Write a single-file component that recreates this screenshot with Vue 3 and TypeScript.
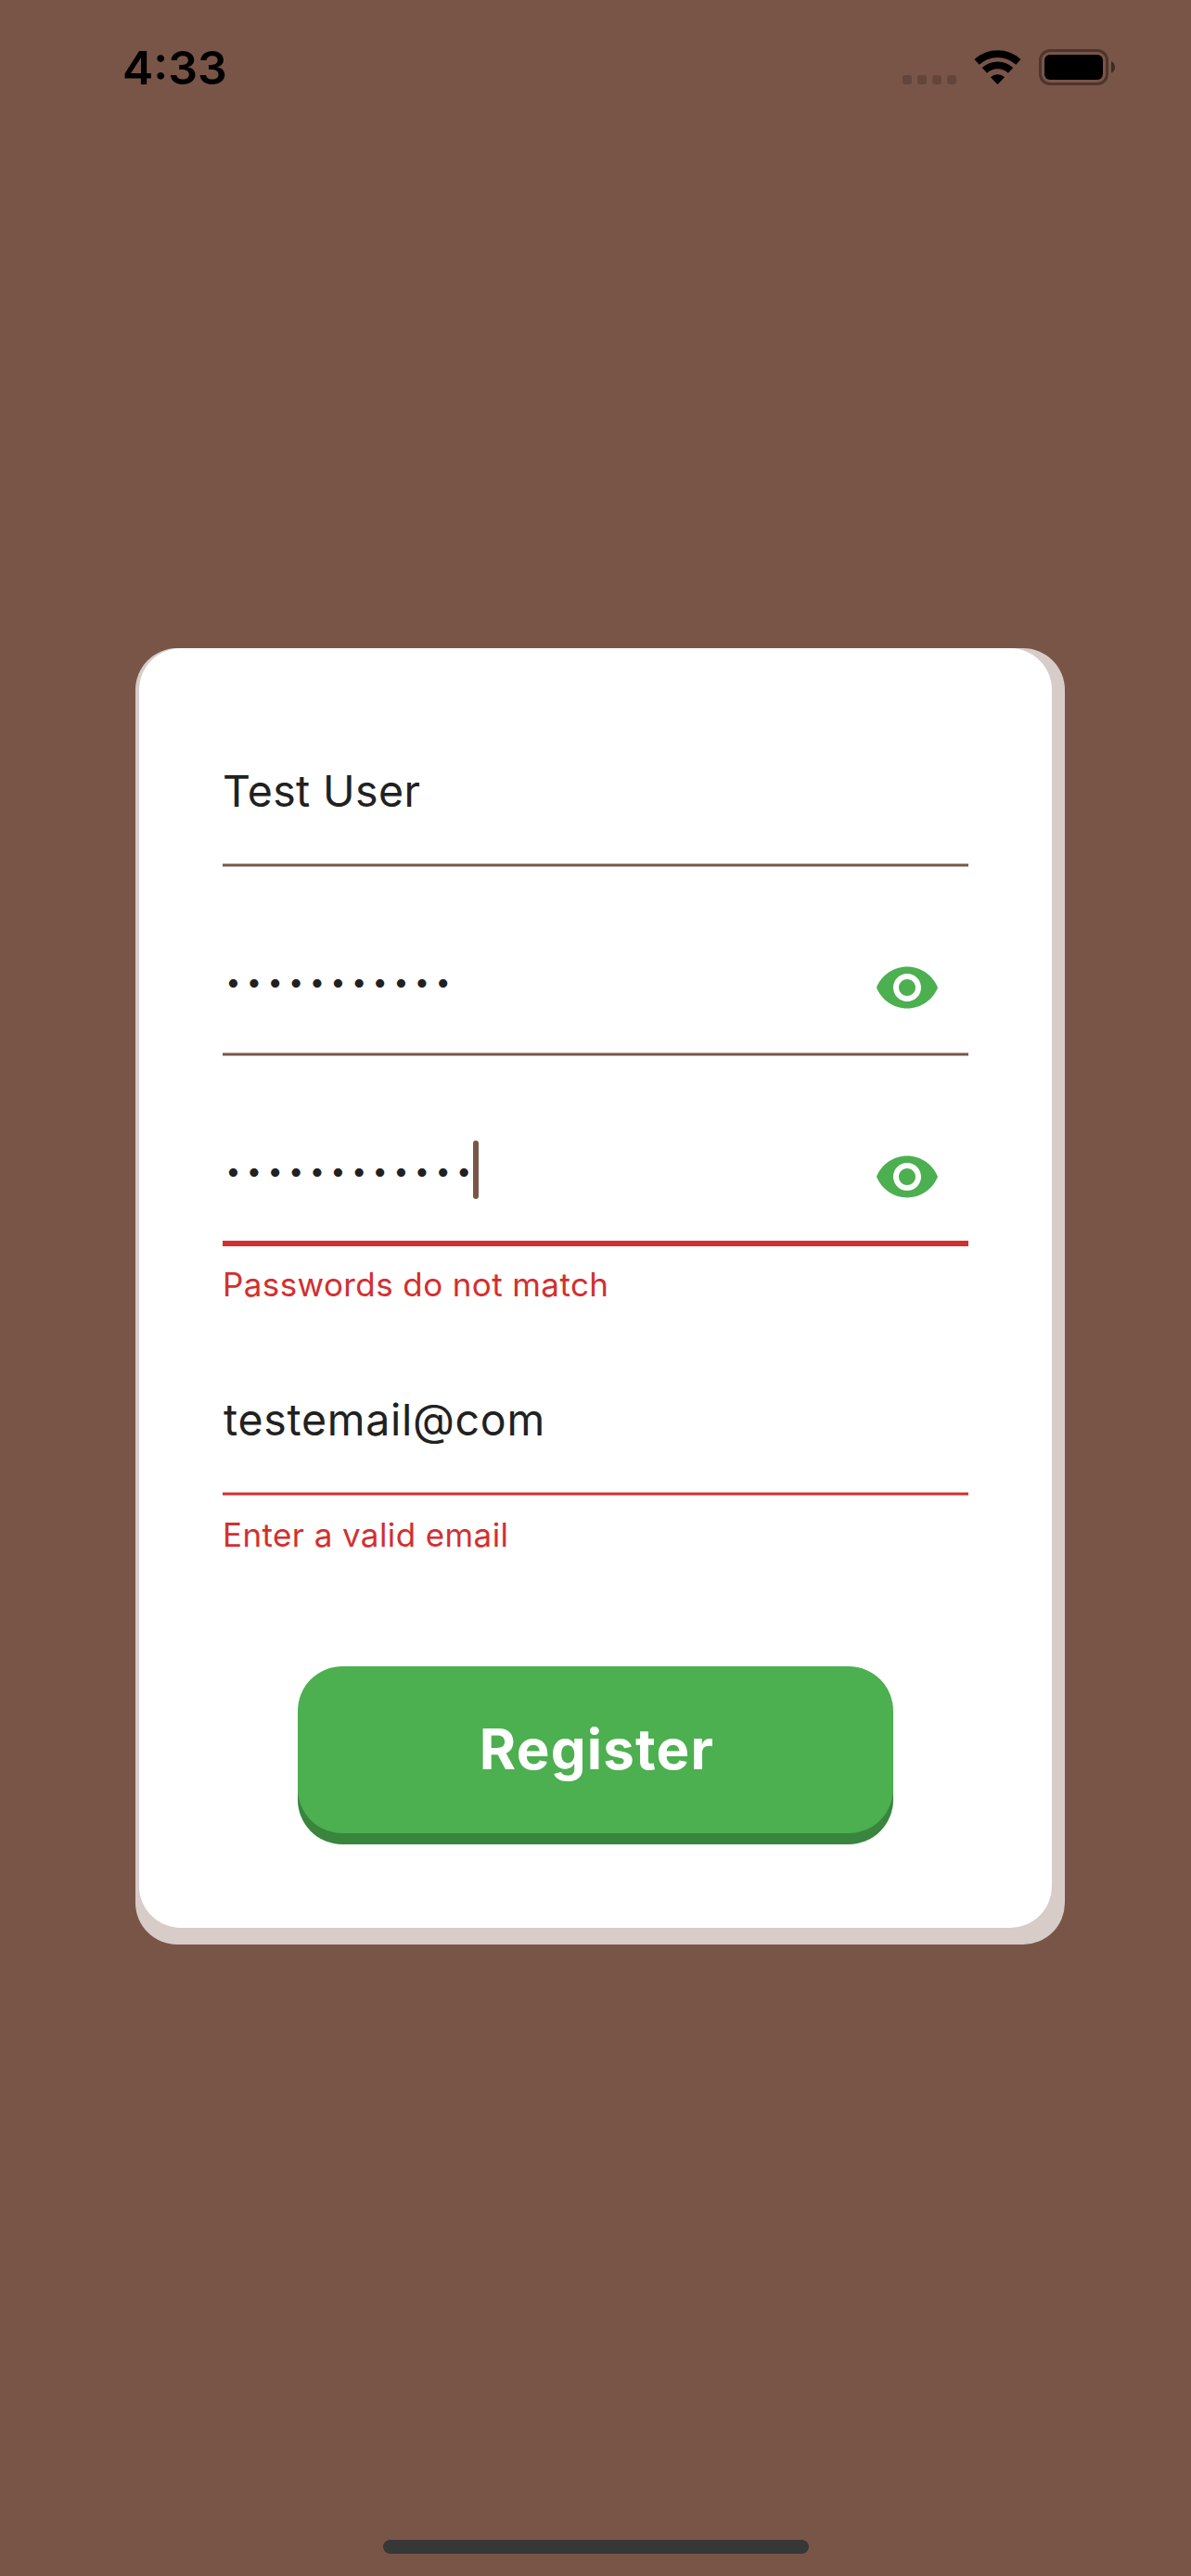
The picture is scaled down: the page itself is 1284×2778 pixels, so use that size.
<script setup lang="ts">
interface Field {
  id: string
  value: string
  secret: boolean
  focused: boolean
  error: string
}

const fields: Field[] = [
  { id: 'name', value: 'Test User', secret: false, focused: false, error: '' },
  { id: 'password', value: '•'.repeat(11), secret: true, focused: false, error: '' },
  { id: 'confirm', value: '•'.repeat(12), secret: true, focused: true, error: 'Passwords do not match' },
  { id: 'email', value: 'testemail@com', secret: false, focused: false, error: 'Enter a valid email' },
]
</script>

<template>
  <div class="screen">
    <header class="status">
      <span class="time">4:33</span>
      <svg class="indicators" width="230" height="44" viewBox="973 50 230 44">
        <g fill="#000" fill-opacity="0.18">
          <rect x="973" y="81" width="10" height="10" rx="3" />
          <rect x="989" y="81" width="10" height="10" rx="3" />
          <rect x="1005" y="81" width="10" height="10" rx="3" />
          <rect x="1021" y="81" width="10" height="10" rx="3" />
        </g>
        <g fill="none" stroke="#000" stroke-width="7.8">
          <path d="M1053.1 66.9A32.9 32.9 0 0 1 1097.9 66.9" />
          <path d="M1061.4 75.9A20.6 20.6 0 0 1 1089.6 75.9" />
        </g>
        <path d="M1075.5 91L1067.9 83.2A11.5 11.5 0 0 1 1083.1 83.2Z" />
        <rect x="1121.5" y="54.5" width="72" height="36" rx="10.5" fill="none" stroke="#000" stroke-opacity="0.37" stroke-width="3" />
        <rect x="1126" y="59" width="63" height="27" rx="6" />
        <path d="M1198 66.3C1200.6 67.4 1202 69.8 1202 72.5S1200.6 77.6 1198 78.7Z" fill-opacity="0.5" />
      </svg>
    </header>

    <main class="card-back">
      <form class="card" @submit.prevent>
        <div
          v-for="field in fields"
          :key="field.id"
          class="field"
          :class="[field.id, { invalid: field.error, focused: field.focused }]"
        >
          <div class="control">
            <div v-if="field.secret" class="dots">
              <span v-for="(dot, i) in field.value" :key="i" class="dot">{{ dot }}</span>
              <i v-if="field.focused" class="caret"></i>
            </div>
            <span v-else class="value">{{ field.value }}</span>
            <svg v-if="field.secret" class="eye" width="72" height="72" viewBox="0 0 24 24">
              <path
                d="M12 4.5C7 4.5 2.73 7.61 1 12c1.73 4.39 6 7.5 11 7.5s9.27-3.11 11-7.5c-1.73-4.39-6-7.5-11-7.5zM12 17c-2.76 0-5-2.24-5-5s2.24-5 5-5 5 2.24 5 5-2.24 5-5 5zm0-8c-1.66 0-3 1.34-3 3s1.34 3 3 3 3-1.34 3-3-1.34-3-3-3z"
              />
            </svg>
          </div>
          <div class="line"></div>
          <div v-if="field.error" class="error"><span>{{ field.error }}</span></div>
        </div>
        <button class="register" type="submit"><span>Register</span></button>
      </form>
    </main>

    <div class="home"></div>
  </div>
</template>

<style>
body {
  background: #795548;
}
</style>

<style scoped>
.screen {
  display: flex;
  flex-direction: column;
  box-sizing: border-box;
  width: 1284px;
  height: 2778px;
  padding-bottom: 24px;
  overflow: hidden;
  background: #795548;
  font-family: Inter, "Liberation Sans", sans-serif;
}
.status {
  display: flex;
  justify-content: space-between;
  box-sizing: border-box;
  height: 699px;
  padding: 50px 81px 0 132px;
}
.time {
  height: 46px;
  line-height: 46px;
  font-size: 50px;
  font-weight: 600;
  letter-spacing: 0;
  color: #000;
}
.card-back {
  box-sizing: border-box;
  width: 1002px;
  margin-left: 145.5px;
  padding: 0 13.5px 18px 4.5px;
  border-radius: 45px;
  background: #d7ccc8;
}
.card {
  display: flex;
  flex-direction: column;
  box-sizing: border-box;
  height: 1380px;
  padding: 90px;
  border-radius: 45px;
  background: #fff;
}
.field {
  margin-bottom: 58px;
}
.field.invalid {
  margin-bottom: 0;
}
.control {
  display: flex;
  align-items: center;
  justify-content: space-between;
  box-sizing: border-box;
  height: 142px;
  padding: 2px 30px 0 0;
}
.focused .control {
  height: 141px;
  padding-top: 3px;
}
.value {
  margin-top: -17px;
  line-height: 58px;
  font-size: 46.5px;
  letter-spacing: 0.35px;
  white-space: pre;
  color: #212121;
}
.email .value {
  padding-left: 1px;
  letter-spacing: 0.7px;
}
.dots {
  display: flex;
  align-items: center;
  height: 63px;
  margin-top: -15px;
}
.dot {
  width: 22.63px;
  margin-top: 2px;
  line-height: 63px;
  font-size: 29px;
  text-align: center;
  color: #212121;
}
.caret {
  width: 6px;
  height: 63px;
  margin-left: -1.5px;
  border-radius: 3px;
  background: #795548;
}
.eye {
  fill: #4caf50;
}
.line {
  box-sizing: border-box;
  height: 4px;
  border: solid #bcaaa3;
  border-width: 1px 0;
  background: #795548;
}
.invalid .line {
  border-color: #e99797;
  background: #d32f2f;
}
.focused .line {
  height: 6px;
  border: 0;
}
.error {
  box-sizing: border-box;
  height: 123px;
  padding-top: 19px;
  line-height: 44px;
  font-size: 35px;
  letter-spacing: 0.4px;
  color: #d32f2f;
}
.email .error {
  height: 184px;
  padding-top: 20px;
}
.register {
  box-sizing: border-box;
  width: 642px;
  height: 180px;
  margin: 0 auto;
  padding: 0 0 2px 3px;
  border: 0;
  border-radius: 48px;
  background: #4caf50;
  box-shadow: 0 12px 0 #39853d;
  font-family: inherit;
  font-size: 60px;
  font-weight: 700;
  letter-spacing: 1.2px;
  color: #fff;
}
.home {
  width: 459px;
  height: 15px;
  margin: auto auto 0 413px;
  border-radius: 8px;
  background: #373737;
}
</style>
